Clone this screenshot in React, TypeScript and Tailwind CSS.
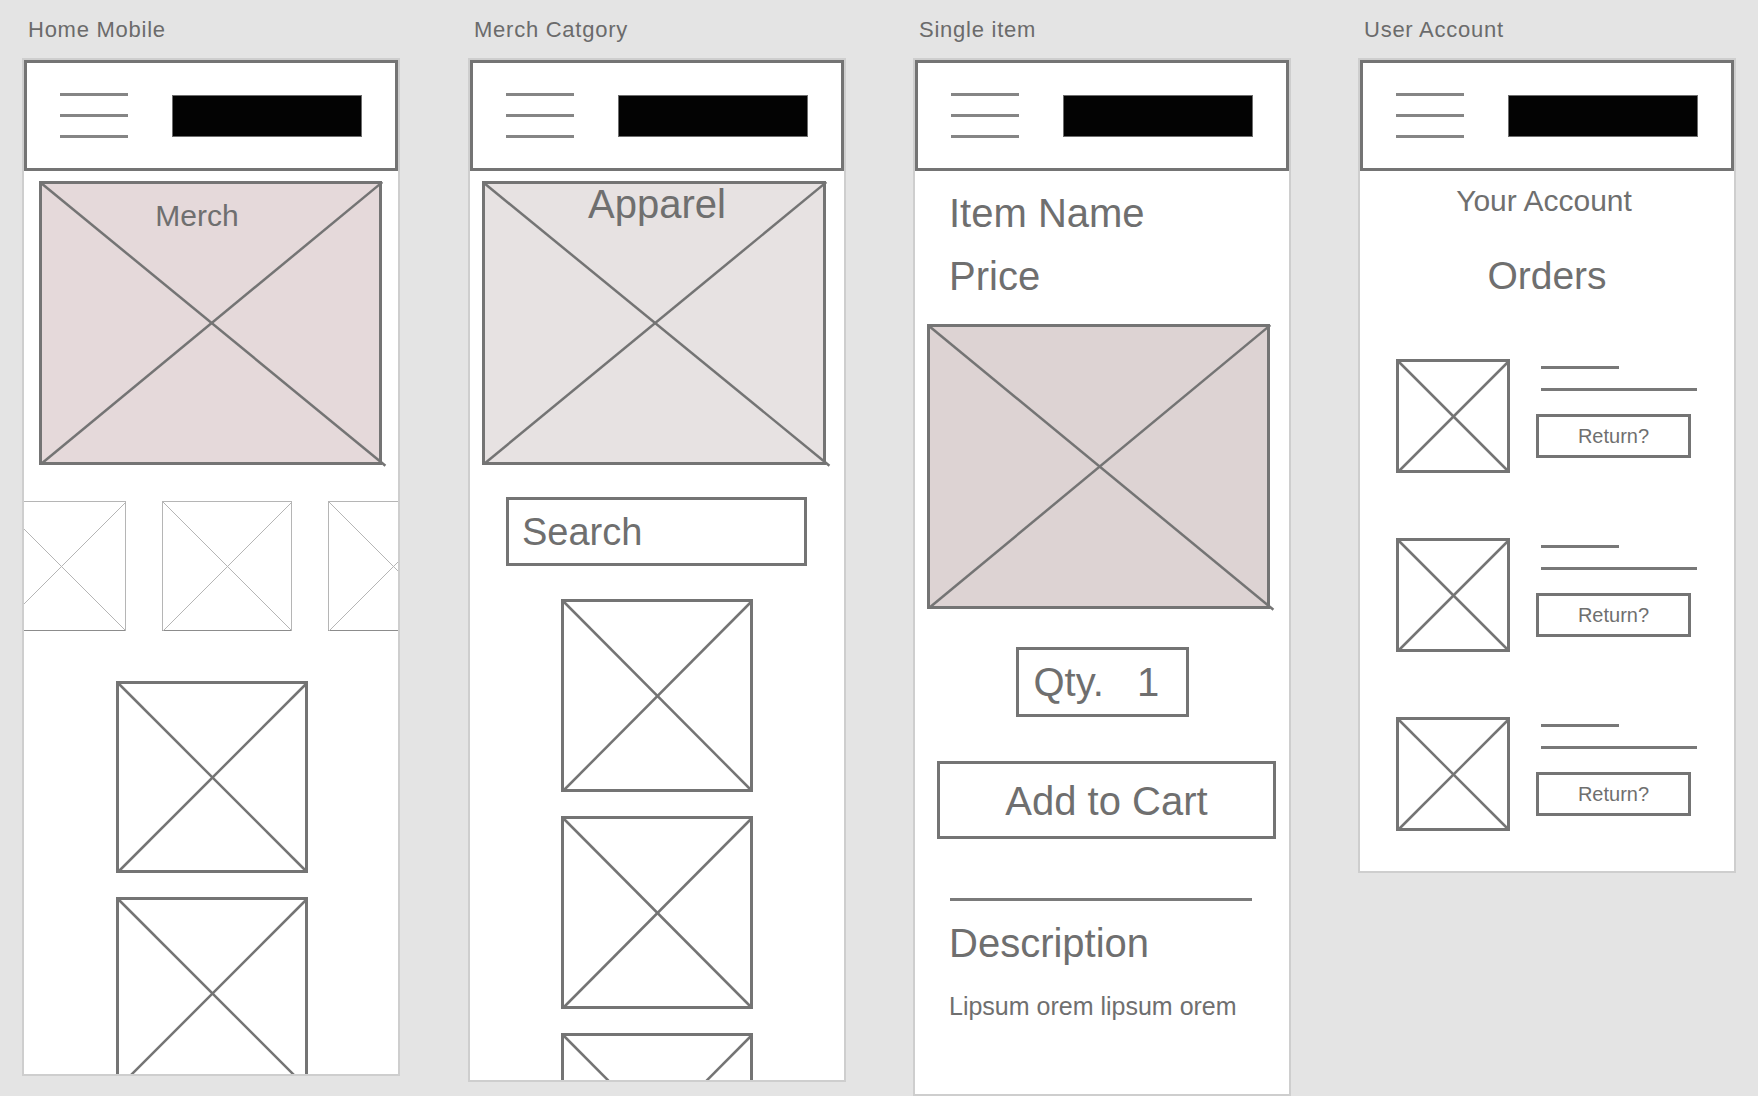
import React from "react";

const STROKE = "#747474";

function XBox({
  className = "",
  thin = false,
  over = false,
  children,
}: {
  className?: string;
  thin?: boolean;
  over?: boolean;
  children?: React.ReactNode;
}) {
  const sc = thin ? "#b5b5b5" : STROKE;
  const sw = thin ? 1 : 2.5;
  return (
    <div
      className={`relative shrink-0 ${
        thin
          ? "border border-[#b5b5b5] border-b-[#8c8c8c]"
          : "border-[3px] border-[#747474]"
      } ${className}`}
    >
      <svg
        className={`absolute ${thin ? "inset-[-0.5px]" : "inset-[-1.5px]"} overflow-visible`}
        style={{ width: thin ? "calc(100% + 1px)" : "calc(100% + 3px)", height: thin ? "calc(100% + 1px)" : "calc(100% + 3px)" }}
        viewBox="0 0 100 100"
        preserveAspectRatio="none"
      >
        <line
          x1="0"
          y1="0"
          x2={over ? 101.3 : 100}
          y2={over ? 100.6 : 100}
          stroke={sc}
          strokeWidth={sw}
          vectorEffect="non-scaling-stroke"
        />
        <line
          x1={over ? 100.4 : 100}
          y1={over ? -0.3 : 0}
          x2="0"
          y2="100"
          stroke={sc}
          strokeWidth={sw}
          vectorEffect="non-scaling-stroke"
        />
      </svg>
      {children}
    </div>
  );
}

function Header() {
  return (
    <div className="flex h-[111px] w-full shrink-0 items-center border-[3px] border-[#747474] bg-white pl-[33px]">
      <div className="flex w-[68px] flex-col gap-[18px]">
        <div className="h-[3px] w-full bg-[#858585]" />
        <div className="h-[3px] w-full bg-[#858585]" />
        <div className="h-[3px] w-full bg-[#858585]" />
      </div>
      <div className="ml-[44px] h-[42px] w-[190px] border border-[#6e6e6e] bg-[#030303]" />
    </div>
  );
}

function Panel({
  label,
  ml,
  h,
  children,
}: {
  label: string;
  ml: string;
  h: string;
  children: React.ReactNode;
}) {
  return (
    <div className={`flex shrink-0 flex-col ${ml}`}>
      <div className="mb-[17px] ml-[6px] h-[22px] text-[22px] leading-none tracking-[0.75px] text-[#6b6b6b]">
        {label}
      </div>
      <div
        className={`flex w-[378px] flex-col overflow-hidden border-2 border-[#cecece] bg-white ${h}`}
      >
        <Header />
        {children}
      </div>
    </div>
  );
}

export default function App() {
  return (
    <div className="flex h-[1096px] w-full items-start overflow-hidden bg-[#e4e4e4] pt-[19px] font-['Liberation_Sans',Arial,sans-serif] text-[#6f6f6f]">
      {/* Home Mobile */}
      <Panel label="Home Mobile" ml="ml-[22px]" h="h-[1018px]">
        <XBox over className="ml-[15px] mt-[10px] h-[284px] w-[343px] bg-[#e5d9da]">
          <div className="relative pr-[27px] pt-[17px] text-center text-[30px] leading-none">
            Merch
          </div>
        </XBox>
        <div className="ml-[-28px] mt-[36px] flex shrink-0 gap-[36px]">
          <XBox thin className="h-[130px] w-[130px] bg-white" />
          <XBox thin className="h-[130px] w-[130px] bg-white" />
          <XBox thin className="h-[130px] w-[130px] bg-white" />
        </div>
        <XBox className="ml-[92px] mt-[50px] h-[192px] w-[192px] bg-white" />
        <XBox className="ml-[92px] mt-[24px] h-[192px] w-[192px] bg-white" />
      </Panel>

      {/* Merch Catgory */}
      <Panel label="Merch Catgory" ml="ml-[68px]" h="h-[1024px]">
        <XBox over className="ml-[12px] mt-[10px] h-[284px] w-[344px] bg-[#e7e2e2]">
          <div className="relative pl-[6px] text-center text-[40px] leading-none">
            Apparel
          </div>
        </XBox>
        <div className="ml-[36px] mt-[32px] flex h-[69px] w-[301px] shrink-0 items-center border-[3px] border-[#747474] pl-[13px] text-[38px] leading-none">
          Search
        </div>
        <div className="ml-[91px] mt-[33px] flex flex-col gap-[24px]">
          <XBox className="h-[193px] w-[192px] bg-white" />
          <XBox className="h-[193px] w-[192px] bg-white" />
          <XBox className="h-[193px] w-[192px] bg-white" />
        </div>
      </Panel>

      {/* Single item */}
      <Panel label="Single item" ml="ml-[67px]" h="h-[1038px]">
        <div className="mt-[22px] pl-[34px] text-[40px] leading-none">Item Name</div>
        <div className="mt-[23px] pl-[34px] text-[40px] leading-none">Price</div>
        <XBox over className="ml-[12px] mt-[28px] h-[285px] w-[343px] bg-[#ddd3d3]" />
        <div className="mt-[38px] flex h-[70px] w-[173px] shrink-0 items-center self-center border-[3px] border-[#747474] pl-[15px] text-[40px] leading-none">
          <span>Qty.</span>
          <span className="ml-[33px]">1</span>
        </div>
        <div className="ml-[22px] mt-[44px] flex h-[78px] w-[339px] shrink-0 items-center justify-center border-[3px] border-[#747474] pt-[2px] text-[40px] leading-none">
          Add to Cart
        </div>
        <div className="ml-[35px] mt-[59px] h-[3px] w-[302px] shrink-0 bg-[#7a7a7a]" />
        <div className="mt-[22px] pl-[34px] text-[40px] leading-none">Description</div>
        <div className="mt-[31px] pl-[34px] text-[25px] leading-none">
          Lipsum orem lipsum orem
        </div>
      </Panel>

      {/* User Account */}
      <Panel label="User Account" ml="ml-[67px]" h="h-[815px]">
        <div className="mt-[15px] pr-[6px] text-center text-[30px] leading-none">Your Account</div>
        <div className="mt-[40px] text-center text-[39px] leading-none">Orders</div>
        <div className="ml-[36px] mt-[64px] flex flex-col gap-[65px]">
          {[0, 1, 2].map((i) => (
            <div key={i} className="flex">
              <XBox className="h-[114px] w-[114px] bg-white" />
              <div className="ml-[26px] flex flex-col">
                <div className="ml-[5px] mt-[7px] h-[3px] w-[78px] bg-[#787878]" />
                <div className="ml-[5px] mt-[19px] h-[3px] w-[156px] bg-[#787878]" />
                <div className="mt-[23px] flex h-[44px] w-[155px] items-center justify-center border-[3px] border-[#747474] text-[20px] leading-none">
                  Return?
                </div>
              </div>
            </div>
          ))}
        </div>
      </Panel>
    </div>
  );
}
